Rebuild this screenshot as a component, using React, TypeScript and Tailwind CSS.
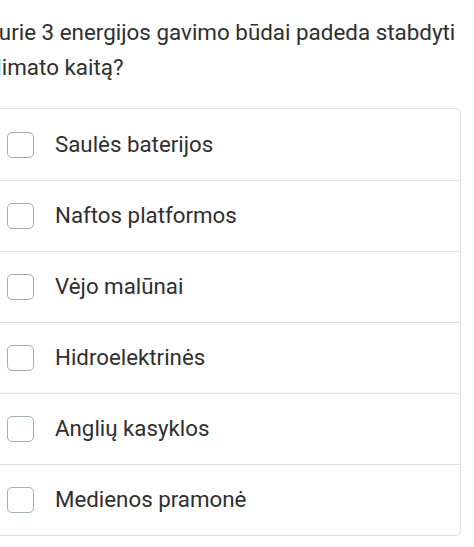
import React from "react";

const options = [
  "Saulės baterijos",
  "Naftos platformos",
  "Vėjo malūnai",
  "Hidroelektrinės",
  "Anglių kasyklos",
  "Medienos pramonė",
];

export default function App() {
  return (
    <div className="w-[474px] h-[547px] overflow-hidden bg-white font-['Roboto',sans-serif] text-[#2f2f2f]">
      <div className="ml-[-14px] w-[475px]">
        <p className="ml-[-1px] pt-[15px] text-[22.4px] leading-[35px] pr-[4px]">
          Kurie 3 energijos gavimo būdai padeda stabdyti klimato kaitą?
        </p>
        <div className="mt-[23px] border border-[#dedede] rounded-[5px]">
          {options.map((label, idx) => (
            <div
              key={idx}
              className={
                "h-[71px] flex items-center pl-[20px] gap-[21px] " +
                (idx > 0 ? "border-t border-[#dedede]" : "")
              }
            >
              <div className="w-[27px] h-[26px] rounded-[5px] border-[1.5px] border-[#9fb0b8] shrink-0" />
              <span className="text-[22.3px]">{label}</span>
            </div>
          ))}
        </div>
      </div>
    </div>
  );
}
